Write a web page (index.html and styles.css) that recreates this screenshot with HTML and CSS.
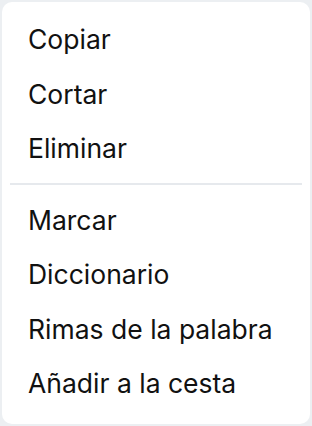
FILE: index.html
```html
<!DOCTYPE html>
<html lang="es">
<head>
    <meta charset="UTF-8">
    <meta name="viewport" content="width=device-width, initial-scale=1.0">
    <title>Menú</title>
    <link rel="stylesheet" href="styles.css">
</head>
<body>
    <div class="menu">
        <ul class="menu-group">
            <li class="menu-item">Copiar</li>
            <li class="menu-item">Cortar</li>
            <li class="menu-item">Eliminar</li>
        </ul>
        <hr class="divider">
        <ul class="menu-group">
            <li class="menu-item">Marcar</li>
            <li class="menu-item">Diccionario</li>
            <li class="menu-item">Rimas de la palabra</li>
            <li class="menu-item">Añadir a la cesta</li>
        </ul>
    </div>
</body>
</html>
```

FILE: styles.css
```css
html, body {
    height: 100%;
}

body {
    margin: 0;
    padding: 2px;
    box-sizing: border-box;
    background-color: #eceff2;
    font-family: "Inter", "Noto Sans", sans-serif;
}

.menu {
    height: 100%;
    box-sizing: border-box;
    background-color: #fff;
    border-radius: 10px;
    padding: 10px 8px 11px;
}

.menu-group {
    list-style: none;
    margin: 0;
    padding: 0;
}

.menu-item {
    padding: 12px 18px;
    font-size: 26.5px;
    line-height: 30.5px;
    color: #111;
}

.divider {
    border: none;
    height: 2px;
    background-color: #e6e9ed;
    margin: 7px 0 8px;
}
```
